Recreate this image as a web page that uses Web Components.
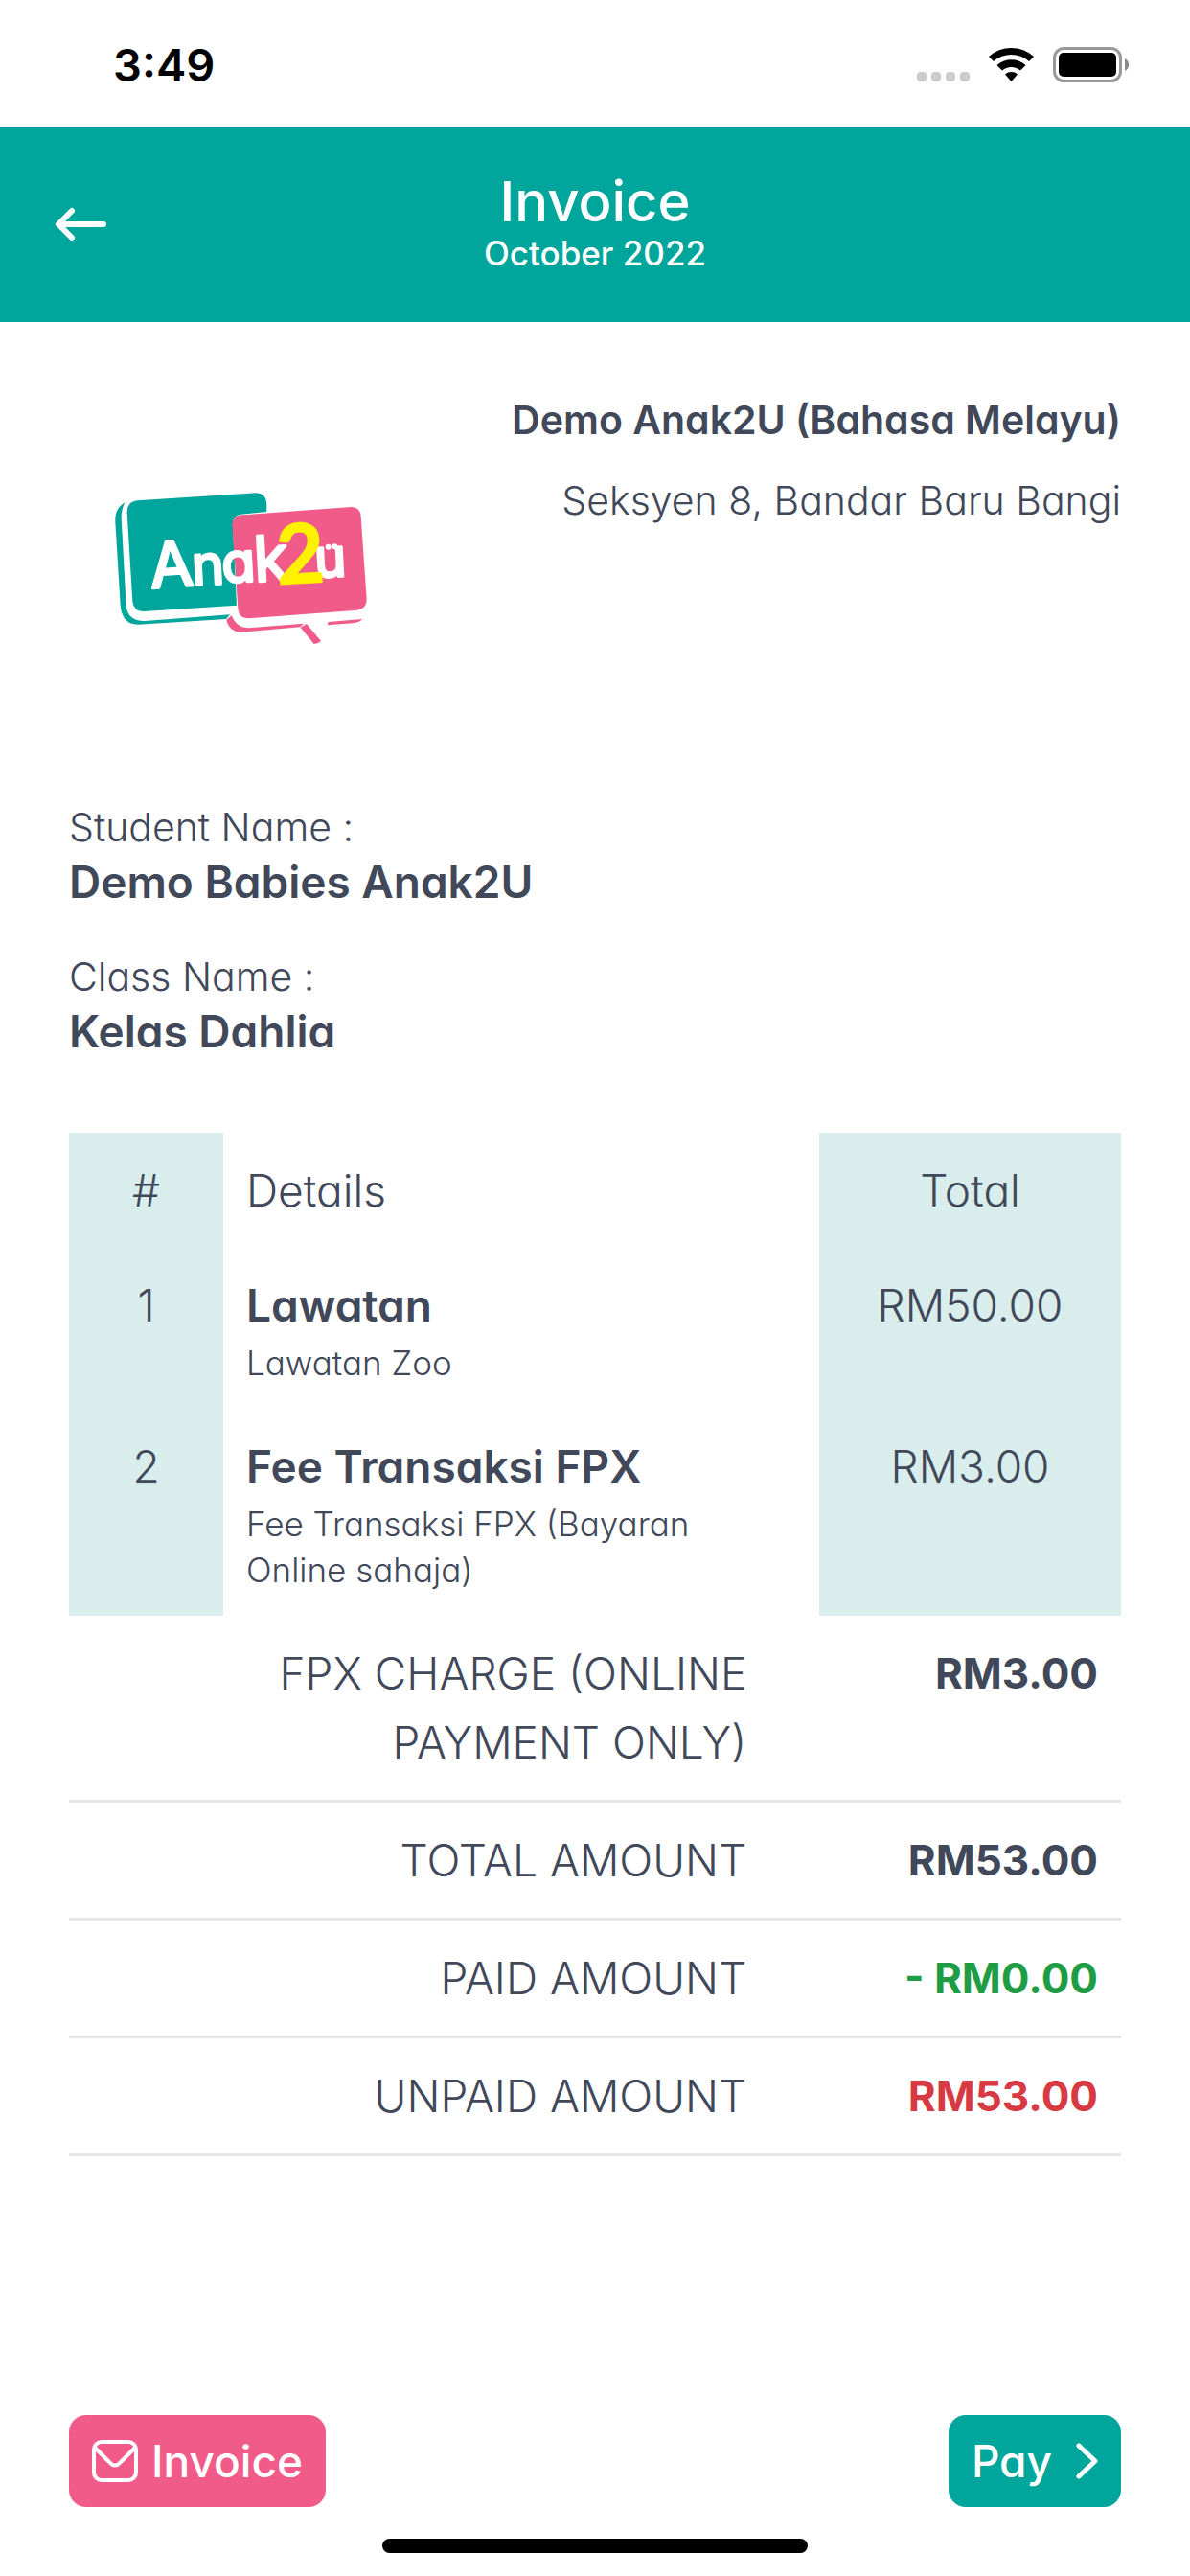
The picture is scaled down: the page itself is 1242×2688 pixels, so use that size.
<!DOCTYPE html>
<html lang="ms">
<head>
<meta charset="utf-8">
<meta name="viewport" content="width=device-width, initial-scale=1">
<title>Invoice</title>
<style>
  :root { --teal: #00a69c; --pink: #f15b8a; --ink: #404859; --tint: #d9eeec; --line: #e5e5ea; }
  * { box-sizing: border-box; }
  body { margin: 0; background: #fff; color: var(--ink); font-family: Inter, "Open Sans", sans-serif; font-weight: 300; font-feature-settings: "cv11"; }
</style>
</head>
<body>
<invoice-app></invoice-app>
<script>
const define = (name, html) => {
  const template = document.createElement('template');
  template.innerHTML = '<style>*{box-sizing:border-box}</style>' + html;
  customElements.define(name, class extends HTMLElement {
    constructor() {
      super();
      this.attachShadow({ mode: 'open' }).append(template.content.cloneNode(true));
    }
  });
};

define('status-bar', `
<style>
  :host { display: flex; align-items: center; justify-content: space-between; height: 132px; padding: 4px 63px 0 118px; color: #000; font-size: 47px; font-weight: 600; line-height: 60px; }
  svg { display: block; }
</style>
<span>3:49</span>
<svg width="222" height="40" viewBox="957 48 222 40" aria-hidden="true">
  <g fill="#ccc"><rect x="957" y="75" width="10" height="10" rx="4"/><rect x="972" y="75" width="10" height="10" rx="4"/><rect x="987" y="75" width="10" height="10" rx="4"/><rect x="1002" y="75" width="10" height="10" rx="4"/></g>
  <path d="M1032 59 A35 35 0 0 1 1079 59 L1074 64 A28 28 0 0 0 1037 64Z M1040.500 68 A22.500 22.500 0 0 1 1070.500 68 L1065 73.500 A14.500 14.500 0 0 0 1046 73.500Z M1049 77.500 A10 10 0 0 1 1062 77.500 L1055.500 85Z"/>
  <rect x="1100.500" y="50.500" width="69" height="34" rx="10" fill="none" stroke="#999" stroke-width="3"/>
  <rect x="1105" y="55" width="60" height="25" rx="5"/>
  <path d="M1174 61 Q1178 63 1178 67.500 Q1178 72 1174 74Z" fill="#888"/>
</svg>`);

define('page-header', `
<style>
  :host { display: grid; grid-template-columns: 1fr auto 1fr; align-items: center; height: 204px; padding: 0 54px; background: var(--teal); color: #fff; text-align: center; }
  button { justify-self: start; margin: 0; padding: 0; border: 0; background: none; color: inherit; }
  svg { display: block; }
  h1 { margin: 0; font-size: 58px; line-height: 60px; font-weight: 500; }
  p { margin: 0; font-size: 35px; line-height: 48px; font-weight: 500; }
</style>
<button aria-label="Back"><svg width="60" height="42" viewBox="0 0 60 42" fill="none" stroke="currentColor" stroke-width="6" stroke-linecap="round" stroke-linejoin="round"><path d="M54 21H8M21 7L7 21L21 35"/></svg></button>
<div><h1><slot name="title"></slot></h1><p><slot name="period"></slot></p></div>`);

define('school-logo', `
<style>:host { display: block; } svg { display: block; } text { font-family: Inter, sans-serif; font-weight: 400; } .two { font-family: Lato, sans-serif; font-weight: 700; }</style>
<svg width="300" height="200" viewBox="0 0 900 600" role="img" aria-label="Anak2U">
  <path fill="#00a69c" d="M91 103Q58 122 61 165L77 425Q82 484 132 485L408 468L420 454L152 474Q100 474 95 426L80 152Q80 124 91 103Z"/>
  <path fill="#00a69c" d="M130 97L500 73Q531 72 535 104V132L455 140Q427 143 429 174L441 425L150 444Q119 444 115 413L98 135Q98 100 130 97Z"/>
  <path fill="#f15b8a" d="M456 142L800 117Q828 117 830 147L848 406Q848 436 820 440L479 466Q448 466 445 435L427 172Q428 145 456 142Z"/>
  <path fill="#f15b8a" d="M425 457L409 470Q417 507 455 509L640 493L651 482L478 496Q439 495 425 457ZM641 494L660 483L705 537Q695 546 683 546ZM728 477L834 468Q824 479 805 481L725 487Z"/>
  <g fill="#fff" stroke="#fff" stroke-width="9" stroke-linejoin="round">
    <text transform="translate(173 371) rotate(-4)" font-size="196">A</text>
    <text transform="translate(303 362) rotate(-3)" font-size="172">n</text>
    <text transform="translate(397 354) rotate(-3)" font-size="172">a</text>
    <text transform="translate(498 351) rotate(-3)" font-size="196">k</text>
    <text transform="translate(687 338) rotate(-3)" font-size="168">u</text>
  </g>
  <text class="two" transform="translate(570 359) rotate(-3)" font-size="258" fill="#fff200" stroke="#fff200" stroke-width="5">2</text>
  <circle cx="728" cy="242" r="9" fill="#fff"/><circle cx="748" cy="241" r="9" fill="#fff"/>
</svg>`);

define('school-info', `
<style>
  :host { display: flex; justify-content: space-between; padding: 66px 72px 0; min-height: 496px; }
  school-logo { padding-top: 88px; margin-left: 28px; }
  div { text-align: right; font-size: 41px; line-height: 72px; }
  h2, p { margin: 0; font-size: inherit; }
  h2 { font-weight: 600; margin-bottom: 12px; }
</style>
<school-logo></school-logo>
<div><h2><slot name="name"></slot></h2><p><slot name="address"></slot></p></div>`);

define('labelled-name', `
<style>
  :host { display: block; height: 156px; }
  dl, dt, dd { margin: 0; }
  dt { font-size: 41px; line-height: 62px; }
  dd { font-size: 46px; line-height: 52px; font-weight: 600; }
</style>
<dl><dt><slot name="label"></slot></dt><dd><slot></slot></dd></dl>`);

define('item-table', `
<style>
  :host { display: block; }
  table { width: 100%; border-collapse: collapse; table-layout: fixed; font-size: 46px; line-height: 72px; text-align: center; }
  th, td { padding: 24px; vertical-align: top; font-weight: 300; }
  th:nth-child(2), td:nth-child(2) { text-align: left; padding-right: 72px; }
  col.number { width: 161px; } col.total { width: 315px; }
  .tint { background: var(--tint); }
  strong { display: block; font-weight: 600; }
  small { display: block; font-size: 35px; line-height: 48px; }
</style>
<table>
  <colgroup><col class="number"><col><col class="total"></colgroup>
  <thead><tr><th class="tint">#</th><th>Details</th><th class="tint">Total</th></tr></thead>
  <tbody>
    <tr><td class="tint">1</td><td><strong>Lawatan</strong><small>Lawatan Zoo</small></td><td class="tint">RM50.00</td></tr>
    <tr><td class="tint">2</td><td><strong>Fee Transaksi FPX</strong><small>Fee Transaksi FPX (Bayaran Online sahaja)</small></td><td class="tint">RM3.00</td></tr>
  </tbody>
</table>`);

define('totals-table', `
<style>
  :host { display: block; }
  table { width: 100%; border-spacing: 0; table-layout: fixed; font-size: 46px; line-height: 72px; text-align: right; }
  th, td { padding: 24px; vertical-align: top; border-bottom: 3px solid var(--line); }
  th { width: 66.6%; padding-left: 168px; font-weight: 300; }
  td { font-size: 44px; font-weight: 700; padding-left: 0; white-space: nowrap; }
  .paid { color: #1f9d45; } .unpaid { color: #d73a42; }
</style>
<table>
  <tr><th scope="row">FPX CHARGE (ONLINE PAYMENT ONLY)</th><td>RM3.00</td></tr>
  <tr><th scope="row">TOTAL AMOUNT</th><td>RM53.00</td></tr>
  <tr><th scope="row">PAID AMOUNT</th><td class="paid">- RM0.00</td></tr>
  <tr><th scope="row">UNPAID AMOUNT</th><td class="unpaid">RM53.00</td></tr>
</table>`);

define('action-button', `
<style>
  :host { display: block; }
  button { display: flex; align-items: center; gap: 14px; height: 96px; margin: 0; padding: 0 24px; border: 0; border-radius: 18px; background: var(--fill); color: #fff; font: 500 46px/60px Inter, sans-serif; font-feature-settings: inherit; }
</style>
<button><slot></slot></button>`);

define('invoice-app', `
<style>
  :host { display: flex; flex-direction: column; min-height: 100vh; }
  main { flex: 1; }
  section { padding: 0 72px; }
  .names { padding-bottom: 38px; }
  footer { display: flex; justify-content: space-between; padding: 0 72px 33px; }
  svg { display: block; fill: none; stroke: currentColor; stroke-linecap: round; stroke-linejoin: round; }
  .home { align-self: center; width: 444px; max-width: 60%; height: 15px; margin-bottom: 24px; border-radius: 8px; background: #000; }
  .mail { --fill: var(--pink); } .pay { --fill: var(--teal); }
</style>
<status-bar></status-bar>
<page-header><span slot="title">Invoice</span><span slot="period">October 2022</span></page-header>
<main>
  <school-info><span slot="name">Demo Anak2U (Bahasa Melayu)</span><span slot="address">Seksyen 8, Bandar Baru Bangi</span></school-info>
  <section class="names">
    <labelled-name><span slot="label">Student Name :</span>Demo Babies Anak2U</labelled-name>
    <labelled-name><span slot="label">Class Name :</span>Kelas Dahlia</labelled-name>
  </section>
  <section><item-table></item-table><totals-table></totals-table></section>
</main>
<footer>
  <action-button class="mail"><svg width="48" height="44" viewBox="0 0 48 44" stroke-width="4"><rect x="2" y="2" width="44" height="40" rx="8"/><path d="M3 8L18 23Q24 30 30 23L45 8"/></svg>Invoice</action-button>
  <action-button class="pay">Pay<svg width="34" height="42" viewBox="0 0 34 42" stroke-width="5"><path d="M14 5L31 21L14 37"/></svg></action-button>
</footer>
<div class="home"></div>`);
</script>
</body>
</html>
